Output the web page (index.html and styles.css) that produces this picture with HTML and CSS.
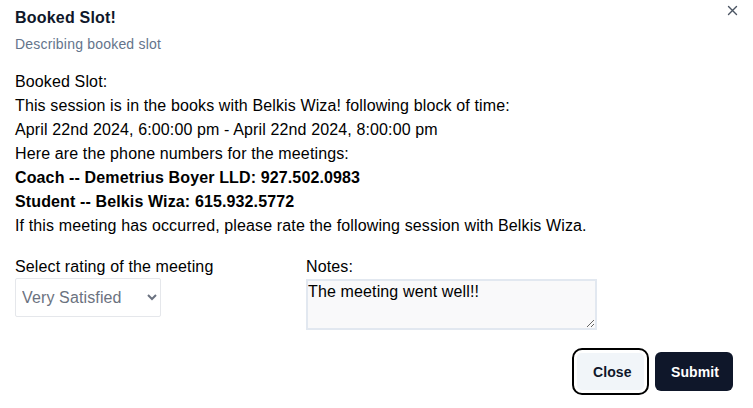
FILE: index.html
```html
<!DOCTYPE html>
<html>
<head>
<meta charset="utf-8">
<link rel="stylesheet" href="styles.css">
</head>
<body>
<div class="dialog">
  <button class="close-x" aria-label="Close">
    <svg width="15" height="15" viewBox="0 0 15 15"><path d="M3.5 3.5 L11.5 11.5 M11.5 3.5 L3.5 11.5" stroke="#4b5563" stroke-width="1.4" stroke-linecap="round"/></svg>
  </button>
  <header class="head">
    <h2 class="title">Booked Slot!</h2>
    <p class="desc">Describing booked slot</p>
  </header>
  <div class="body">
    <div>Booked Slot:</div>
    <div>This session is in the books with Belkis Wiza! following block of time:</div>
    <div>April 22nd 2024, 6:00:00 pm - April 22nd 2024, 8:00:00 pm</div>
    <div>Here are the phone numbers for the meetings:</div>
    <div class="b">Coach -- Demetrius Boyer LLD: 927.502.0983</div>
    <div class="b">Student -- Belkis Wiza: 615.932.5772</div>
    <div>If this meeting has occurred, please rate the following session with Belkis Wiza.</div>
  </div>
  <div class="form">
    <div class="field rating">
      <label class="lbl">Select rating of the meeting</label>
      <select class="sel"><option>Very Satisfied</option></select>
    </div>
    <div class="field notes">
      <label class="lbl">Notes:</label>
      <textarea class="ta">The meeting went well!!</textarea>
    </div>
  </div>
  <div class="actions">
    <button class="btn btn-close">Close</button>
    <button class="btn btn-submit">Submit</button>
  </div>
</div>
</body>
</html>
```
FILE: styles.css
```css
* { box-sizing: border-box; }
html, body { margin: 0; padding: 0; background: #fff; }
body { font-family: "Liberation Sans", Arial, sans-serif; color: #000; letter-spacing: 0.13px; }
.dialog { position: relative; padding: 6px 15px 0 15px; width: 753px; height: 408px; }
.close-x { position: absolute; top: 3px; right: 13px; border: 0; background: none; padding: 0; width: 15px; height: 15px; }
.head { margin: 0; }
.title { margin: 0; font-size: 16px; line-height: 24px; font-weight: 700; color: #0f172a; letter-spacing: 0.2px; }
.desc { margin: 4px 0 0; font-size: 14px; line-height: 20px; color: #64748b; letter-spacing: 0.2px; }
.body { margin-top: 16px; font-size: 16px; line-height: 24px; }
.b { font-weight: 700; }
.form { display: flex; margin-top: 17px; }
.field { display: flex; flex-direction: column; }
.rating { width: 291px; }
.lbl { font-size: 16px; line-height: 24px; margin-bottom: 0; }
.sel { width: 146px; height: 39px; margin-top: -1px; border: 1.5px solid #e5e7eb; background: #fff; color: #6b7280; font-family: inherit; font-size: 16px; padding: 0 2px; border-radius: 2px; letter-spacing: 0.13px; }
.ta { width: 291px; height: 51px; border: 2px solid #e2e8f0; background: #f9f9fa; font-family: inherit; font-size: 16px; line-height: 20px; padding: 1px 0px; resize: both; color: #000; letter-spacing: 0.13px; }
.actions { display: flex; justify-content: flex-end; gap: 6px; margin-top: 22px; padding-right: 5px; align-items: center; }
.btn { font-family: inherit; font-size: 14px; font-weight: 700; height: 39px; border-radius: 6px; padding: 0 16px; border: 0; letter-spacing: 0.1px; }
.btn-close { background: #f1f5f9; color: #0f172a; outline: 2px solid #000; outline-offset: 2px; border: 1px solid #fff; width: 69px; margin-right: 4px; }
.btn-submit { background: #0f172a; color: #fff; width: 78px; }
```
